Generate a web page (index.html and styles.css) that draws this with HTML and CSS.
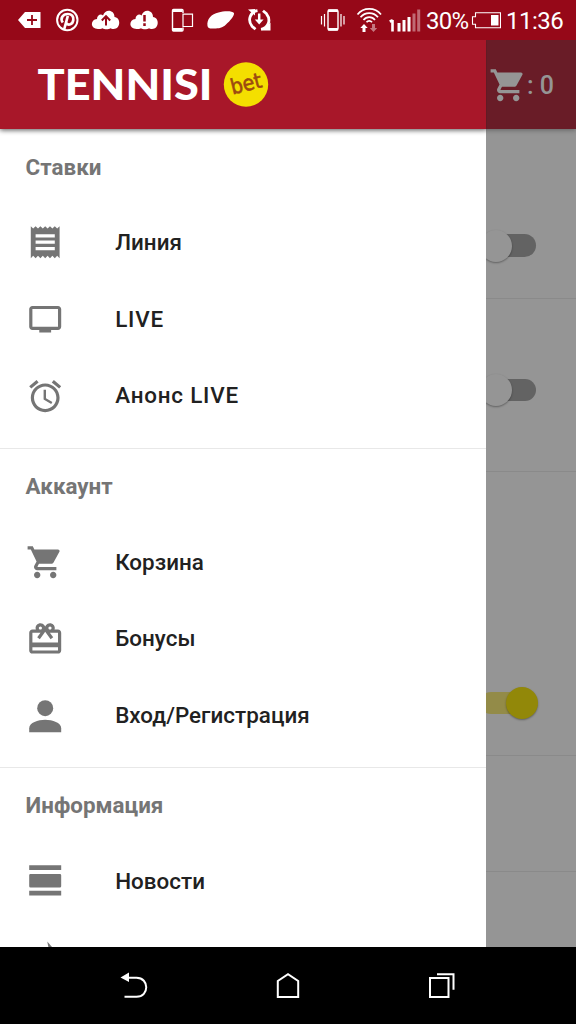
FILE: index.html
```html
<!DOCTYPE html>
<html lang="ru">
<head>
<meta charset="utf-8">
<title>TENNISI bet</title>
<link rel="stylesheet" href="styles.css">
</head>
<body>
<div class="phone">
  <header class="status">
    <svg class="status-icons" width="288" height="40" viewBox="0 0 288 40" fill="#fff">
      <path d="M18 20l7-8h15.500v16H25z"/>
      <path d="M32 15v10M27 20h10" stroke="#960818" stroke-width="1.800"/>
      <circle cx="67.300" cy="20" r="10.200" fill="none" stroke="#fff" stroke-width="2"/>
      <path d="M64 30l3.800-14M62.800 22.500c-3-4 0-8.500 5-8.500 4 0 6 2.500 5.500 6-.6 4.500-5 6-7 3" fill="none" stroke="#fff" stroke-width="2.700"/>
      <path id="cloud" d="M98 29c-8 0-8-9.500-1-10 0-4 4-5.500 6-3.500 2-7 11.500-6 11.500 1.500 6.500.5 6.500 12-1 12-1.500 0-2.500-.3-3-.8-2 1.300-6 1.300-8 0-1.500.8-3 .8-4.500.8z"/>
      <path d="M106 25.500V17M101.800 20.500l4.200-4.300 4.200 4.300" fill="none" stroke="#960818" stroke-width="2"/>
      <use href="#cloud" x="38.500"/>
      <path d="M144.500 15v6.500M144.500 23.200v2.800" stroke="#960818" stroke-width="2.500"/>
      <path d="M183 13v-2.500q0-1-1-1h-8.500q-1 0-1 1V30q0 1 1 1H182q1 0 1-1v-2.500" fill="none" stroke="#fff" stroke-width="1.400"/>
      <path d="M173 9h9.500v3H173zM173 28h9.500v3H173z"/>
      <path d="M183 14.200h9.500v12.300H183z" fill="none" stroke="#fff" stroke-width="1.200"/>
      <path d="M207.500 26c-1-7 4-12 11-13.500 5-1.500 13.500-2 15.500.5.500 3-4 8-8 11.500-3.500 3.500-7 4-12 4-4 .2-6 0-6.500-2.500z"/>
      <path d="M257.500 10.700c-7 1-10.500 9-5.500 15.500l3.500 3M261 29.300c7-1 10.500-9 5.500-15.500l-3.500-3" fill="none" stroke="#fff" stroke-width="2.800"/>
      <path d="M248 9.500l7-.5 0 6.500zM270.500 30.500h-8.500l8.500-8z"/>
      <path d="M259.200 13.500v7" stroke="#fff" stroke-width="2.500"/><path d="M254.800 19.500h8.800l-4.400 5z"/>
    </svg>
    <svg class="status-icons" width="136" height="40" viewBox="288 0 136 40" fill="#fff">
      <path d="M321.500 16v8.500M324.500 14v12.500M341 14v12.500M344 16v8.500" stroke="#fff" stroke-width="1.200"/>
      <rect x="328" y="10" width="10" height="20" rx="1.500" fill="none" stroke="#fff" stroke-width="1.400"/>
      <path d="M328 9.500h10v2.500h-10zM328 28h10v2.500h-10z"/>
      <path d="M357.500 14.500c6-7.500 17.500-7.500 23.500 0M360.500 17.200c4.500-5.500 13-5.500 17.500 0M363.500 20c3-3.800 8.500-3.800 11.500 0M366.500 22.300c1.500-1.800 4-1.800 5.500 0" fill="none" stroke="#fff" stroke-width="1.700"/>
      <path d="M364 24l3.700 4h-2.200v4h-3v-4h-2.200z"/>
      <path d="M373.500 32l-3.700-4h2.200v-4h3v4h2.200z" opacity=".45"/>
      <path d="M392.500 20V31.500M389.700 21.500l3-1.200" stroke="#fff" stroke-width="2.600" fill="none"/>
      <path d="M397.500 23h3v8.500h-3zM402.500 20h3v11.500h-3zM407.500 17h3v14.500h-3z"/>
      <path d="M412.500 13.500h3v18h-3zM417.200 9.500h3v22h-3z" opacity=".4"/>
    </svg>
    <span class="percent">30%</span>
    <svg class="battery" width="30" height="18" viewBox="471 11 30 18" fill="#fff">
      <path d="M475.500 12.700h25v15h-25v-3.500h-3v-7.500h3z" fill="none" stroke="#fff" stroke-width="1.100"/>
      <path d="M491 15h7.500v10.500H491z"/>
    </svg>
    <span class="clock">11:36</span>
  </header>
  <div class="screen">
    <main class="page">
      <div class="page-bar">
        <svg width="38.400" height="38.400" viewBox="0 0 24 24"><path d="M7 18c-1.100 0-1.990.9-1.990 2S5.900 22 7 22s2-.9 2-2-.9-2-2-2zM1 2v2h2l3.600 7.590-1.350 2.450c-.16.280-.25.610-.25.960 0 1.100.9 2 2 2h12v-2H7.420c-.14 0-.25-.11-.25-.25l.03-.12.900-1.630h7.450c.75 0 1.410-.41 1.750-1.030l3.580-6.490c.08-.14.120-.31.120-.48 0-.55-.45-1-1-1H5.210l-.94-2H1zm16 16c-1.100 0-1.990.9-1.990 2s.89 2 1.990 2 2-.9 2-2-.9-2-2-2z"/></svg>
        <span class="cart-count">: 0</span>
      </div>
      <div class="setting setting-a"><span class="switch"></span></div>
      <div class="setting setting-b"><span class="switch"></span></div>
      <div class="setting setting-c"><span class="switch switch-on"></span></div>
      <div class="setting setting-d"></div>
    </main>
    <aside class="drawer">
      <div class="brand">
        <svg width="300" height="89" viewBox="0 40 300 89">
          <text class="logo" x="37.500" y="99.500" textLength="175" lengthAdjust="spacingAndGlyphs">TENNISI</text>
          <circle cx="246" cy="84.500" r="22.200" fill="#f4df00"/>
          <text class="logo-bet" x="230.500" y="91" textLength="31.500" lengthAdjust="spacingAndGlyphs" transform="rotate(-14 246 84.500)">bet</text>
        </svg>
      </div>
      <nav class="menu">
        <section class="group">
          <h2 class="group-title">Ставки</h2>
          <a class="item"><svg class="icon" viewBox="0 0 24 24"><path d="M18 17H6v-2h12v2zm0-4H6v-2h12v2zm0-4H6V7h12v2zM3 22l1.500-1.500L6 22l1.500-1.500L9 22l1.500-1.500L12 22l1.500-1.500L15 22l1.500-1.500L18 22l1.500-1.500L21 22V2l-1.500 1.500L18 2l-1.500 1.500L15 2l-1.500 1.500L12 2l-1.500 1.500L9 2 7.500 3.500 6 2 4.500 3.500 3 2v20z"/></svg><span>Линия</span></a>
          <a class="item item-wide"><svg class="icon" viewBox="0 0 24 24"><path d="M20 3.700H4c-1.100 0-2 .9-2 2v11c0 1.100.9 2 2 2h4.300v1.600h7.400v-1.600H20c1.100 0 2-.9 2-2v-11c0-1.100-.9-2-2-2zm0 13H4v-11h16z"/></svg><span>LIVE</span></a>
          <a class="item item-wide"><svg class="icon" viewBox="0 0 24 24"><path d="M22 5.720l-4.600-3.860-1.290 1.530 4.600 3.860L22 5.720zM7.880 3.390L6.600 1.860 2 5.710l1.290 1.530 4.590-3.850zM12.500 8H11v6l4.750 2.850.75-1.230-4-2.370V8zM12 4c-4.970 0-9 4.030-9 9s4.020 9 9 9c4.970 0 9-4.030 9-9s-4.030-9-9-9zm0 16c-3.870 0-7-3.130-7-7s3.130-7 7-7 7 3.130 7 7-3.130 7-7 7z"/></svg><span>Анонс LIVE</span></a>
        </section>
        <section class="group">
          <h2 class="group-title">Аккаунт</h2>
          <a class="item"><svg class="icon" viewBox="0 0 24 24"><path d="M7 18c-1.100 0-1.990.9-1.990 2S5.900 22 7 22s2-.9 2-2-.9-2-2-2zM1 2v2h2l3.600 7.590-1.350 2.450c-.16.280-.25.610-.25.960 0 1.100.9 2 2 2h12v-2H7.420c-.14 0-.25-.11-.25-.25l.03-.12.900-1.630h7.450c.75 0 1.410-.41 1.750-1.030l3.580-6.490c.08-.14.120-.31.120-.48 0-.55-.45-1-1-1H5.210l-.94-2H1zm16 16c-1.100 0-1.990.9-1.990 2s.89 2 1.990 2 2-.9 2-2-.9-2-2-2z"/></svg><span>Корзина</span></a>
          <a class="item"><svg class="icon" viewBox="0 0 24 24"><path d="M20 6h-2.180c.11-.31.180-.65.180-1 0-1.660-1.340-3-3-3-1.050 0-1.960.54-2.500 1.350l-.5.670-.5-.68C10.960 2.540 10.050 2 9 2 7.340 2 6 3.340 6 5c0 .35.070.69.180 1H4c-1.110 0-1.990.89-1.990 2L2 19c0 1.110.89 2 2 2h16c1.110 0 2-.89 2-2V8c0-1.110-.89-2-2-2zm-5-2c.55 0 1 .45 1 1s-.45 1-1 1-1-.45-1-1 .45-1 1-1zM9 4c.55 0 1 .45 1 1s-.45 1-1 1-1-.45-1-1 .45-1 1-1zm11 15H4v-2h16v2zm0-5H4V8h5.080L7 10.830 8.620 12 11 8.760l1-1.360 1 1.360L15.380 12 17 10.830 14.920 8H20v6z"/></svg><span>Бонусы</span></a>
          <a class="item"><svg class="icon" viewBox="0 0 24 24"><circle cx="12" cy="7" r="5"/><path d="M2 22v-2.500C2 16 7.500 14.200 12 14.200S22 16 22 19.500V22z"/></svg><span>Вход/Регистрация</span></a>
        </section>
        <section class="group">
          <h2 class="group-title">Информация</h2>
          <a class="item"><svg class="icon" viewBox="0 0 24 24"><path d="M2 18h20v3H2zM2 2h20v3H2zM2.800 7.500h18.400q.8 0 .8.800v6.900q0 .8-.8.800H2.800q-.8 0-.8-.8V8.300q0-.8.8-.8z"/></svg><span>Новости</span></a>
          <a class="item"><svg class="icon" viewBox="0 0 24 24"><path d="M13.300 1.500l4.800 5.700h-3.700z"/></svg></a>
        </section>
      </nav>
    </aside>
  </div>
  <footer class="navbar">
    <svg width="30" height="28" viewBox="120 972 30 28" fill="none" stroke="#fff" stroke-width="2"><path d="M127 977.800h9.500c13 0 13 19 0 19H124.500"/><path d="M120.500 977.500l8.500-5v9.500z" fill="#fff" stroke="none"/></svg>
    <svg width="26" height="28" viewBox="276 972 26 28" fill="none" stroke="#fff" stroke-width="2"><path d="M277.800 997v-16l10.200-6.800 10.200 6.800v16z"/></svg>
    <svg width="28" height="28" viewBox="428 972 28 28" fill="none" stroke="#fff" stroke-width="2"><path d="M430 978h18.500v19H430zM437 974.300h16.500v15.500"/></svg>
  </footer>
</div>
</body>
</html>
```

FILE: styles.css
```css
* { box-sizing: border-box; }
body {
  margin: 0;
  font-family: Roboto, "Liberation Sans", sans-serif;
  background: #000;
}
.phone {
  width: 576px;
  height: 1024px;
  display: flex;
  flex-direction: column;
  overflow: hidden;
}
.status {
  height: 40px;
  flex: none;
  display: flex;
  align-items: center;
  background: #960818;
  color: #fff;
  font-size: 24px;
  white-space: nowrap;
}
.status-icons { flex: none; }
.percent { width: 47px; padding-left: 2px; letter-spacing: -0.800px; padding-top: 2px; }
.battery { flex: none; }
.clock { padding: 2px 0 0 5px; letter-spacing: -0.500px; }

.screen {
  position: relative;
  height: 907px;
  flex: none;
  overflow: hidden;
  background: #959595;
}
.page { display: flex; flex-direction: column; }
.page-bar {
  height: 89px;
  display: flex;
  align-items: center;
  justify-content: flex-end;
  padding: 1px 22px 0 0;
  background: #691c27;
  color: #959595;
  fill: #959595;
  font-size: 25px;
  font-weight: 500;
  box-shadow: 0 1px 5px rgba(0, 0, 0, .35);
  z-index: 1;
}
.setting {
  display: flex;
  justify-content: flex-end;
  padding-right: 40px;
  border-bottom: 1px solid #8a8a8a;
}
.setting-a { height: 170px; padding-top: 105.400px; }
.setting-b { height: 173px; padding-top: 79.500px; }
.setting-c { height: 284px; padding-top: 220px; }
.setting-d { height: 116px; }
.switch {
  position: relative;
  width: 56px;
  height: 22.400px;
  border-radius: 12px;
  background: #636363;
}
.switch::before {
  content: "";
  position: absolute;
  top: -4.800px;
  left: 0;
  width: 32px;
  height: 32px;
  border-radius: 50%;
  background: #959595;
  box-shadow: 0 1px 2px rgba(0, 0, 0, .35);
}
.switch-on { background: #938b48; }
.switch-on::before { left: 25.500px; background: #928809; }

.drawer {
  position: absolute;
  top: 0;
  left: 0;
  width: 486.400px;
  height: 907px;
  background: #fff;
  display: flex;
  flex-direction: column;
}
.brand {
  height: 89px;
  flex: none;
  background: #a81729;
  box-shadow: 0 1px 5px rgba(0, 0, 0, .4);
  clip-path: inset(0 0 -10px 0);
  z-index: 1;
}
.brand svg { display: block; }
.logo { font: 900 42px Lato, sans-serif; fill: #fff; }
.logo-bet { font: 400 21px "DejaVu Sans", sans-serif; fill: #9c4a10; stroke: #9c4a10; stroke-width: 0.600px; }
.group { height: 319.200px; }
.group:first-child { height: 318.800px; }
.group + .group { border-top: 1.600px solid #e8e8e8; }
.group-title {
  margin: 0;
  height: 75px;
  padding-left: 25.600px;
  display: flex;
  align-items: center;
  font-size: 22.400px;
  font-weight: 700;
  color: #757575;
}
.item {
  height: 76.800px;
  padding-left: 25.600px;
  display: flex;
  align-items: center;
  gap: 51.200px;
  font-size: 22.400px;
  font-weight: 500;
  letter-spacing: 0.030px;
  color: #212121;
}
.item span { padding-bottom: 1.200px; }
.item-wide { letter-spacing: 0.800px; }
.icon { width: 38.400px; height: 38.400px; flex: none; fill: #757575; }

.navbar {
  height: 77px;
  flex: none;
  display: flex;
  align-items: center;
  justify-content: space-between;
  padding: 0 120px;
  background: #000;
}
```
